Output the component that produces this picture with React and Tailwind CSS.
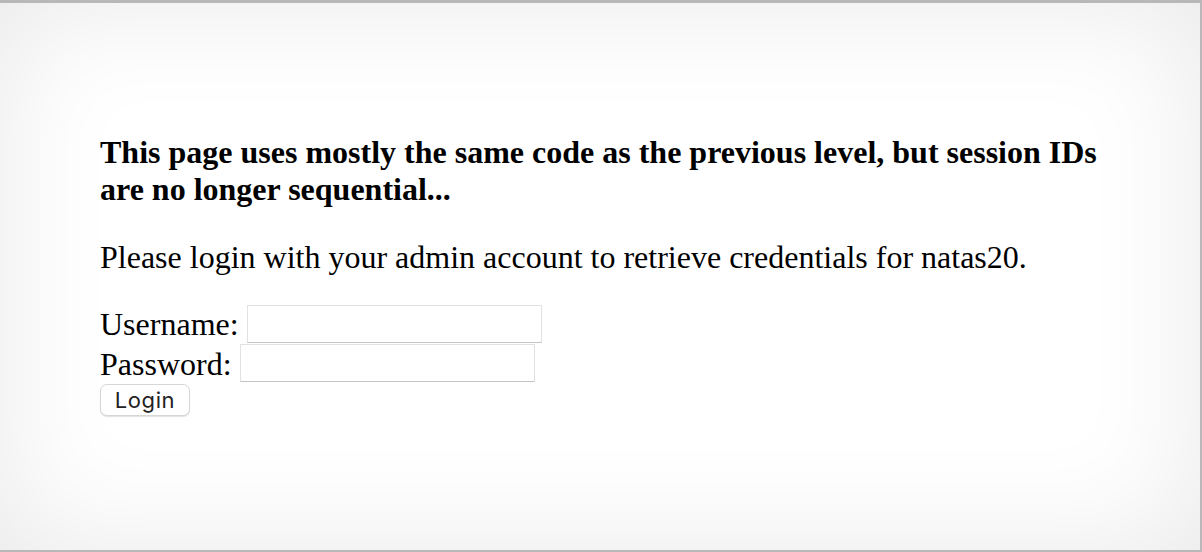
import React from "react";

export default function App() {
    return (
        <div className="h-[552px] overflow-hidden border-t-[3px] border-r-2 border-b-2 border-[#b8b8b8] bg-white shadow-[inset_0_0_120px_rgba(0,0,0,0.09)] pl-[100px] pt-[131px] font-['Liberation_Serif',serif] text-[32px] leading-[37px] text-black">
            <p className="font-bold">
                This page uses mostly the same code as the previous level, but session IDs
                <br />
                are no longer sequential...
            </p>

            <p className="mt-[31px]">
                Please login with your admin account to retrieve credentials for natas20.
            </p>

            <form className="mt-[28px]" onSubmit={(e) => e.preventDefault()}>
                <div className="flex h-[40px] items-start gap-[8px]">
                    <span className="mt-[2px]">Username:</span>
                    <input
                        type="text"
                        name="username"
                        className="mt-[1px] h-[38px] w-[295px] border border-[#e2e2e2] border-b-[#c4c4c4] bg-white outline-none"
                    />
                </div>
                <div className="flex h-[40px] items-start gap-[8px]">
                    <span className="mt-[2px]">Password:</span>
                    <input
                        type="password"
                        name="password"
                        className="h-[38px] w-[295px] border border-[#e2e2e2] border-b-[#c4c4c4] bg-white outline-none"
                    />
                </div>
                <button
                    type="submit"
                    className="flex h-[32px] w-[90px] items-center justify-center rounded-[7px] border border-[#d6d6d6] bg-white font-['Inter',sans-serif] text-[22px] leading-none tracking-[0.6px] text-[#222] shadow-[0_1px_1px_rgba(0,0,0,0.12)]"
                >
                    Login
                </button>
            </form>
        </div>
    );
}
